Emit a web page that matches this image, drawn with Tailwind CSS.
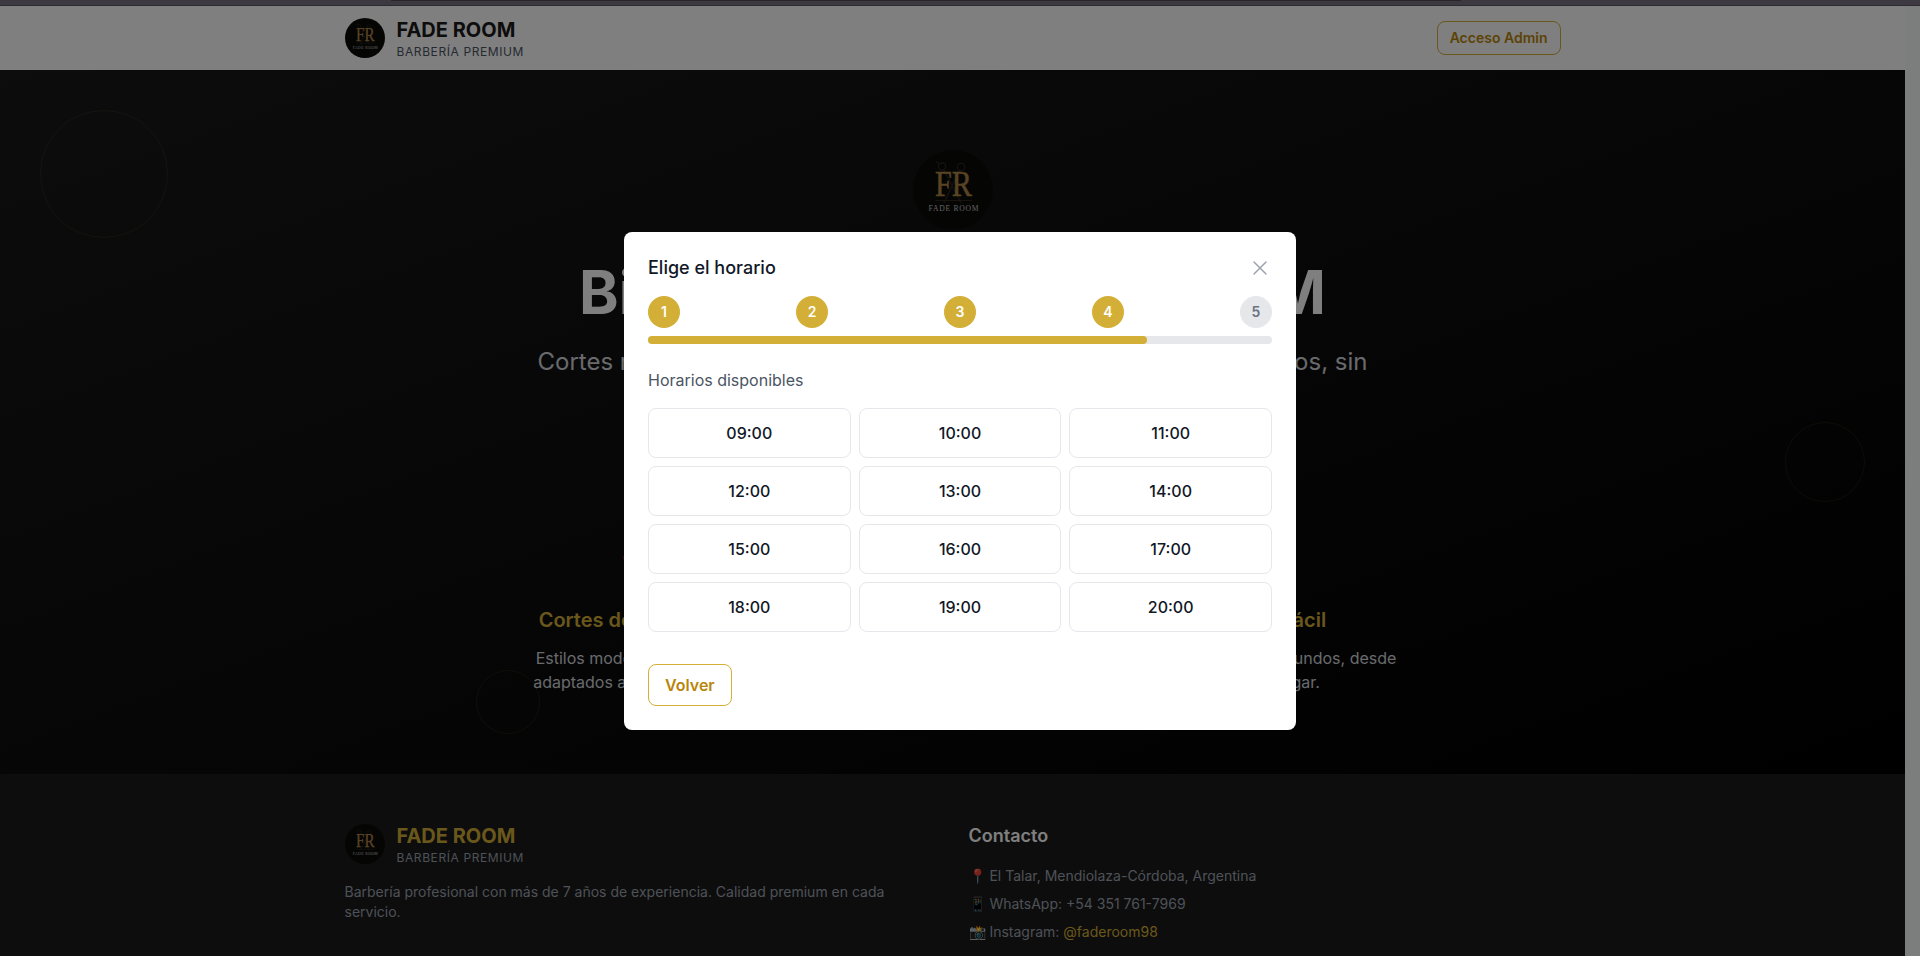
<!DOCTYPE html>
<html lang="es">
<head>
<meta charset="utf-8">
<title>Fade Room</title>
<script src="https://cdn.jsdelivr.net/npm/@tailwindcss/browser@4"></script>
</head>
<body class="h-[956px] w-[1920px] overflow-hidden bg-black font-['Inter',sans-serif] antialiased">
<svg class="hidden">
  <symbol id="logo" viewBox="0 0 80 80">
    <circle cx="40" cy="40" r="40" fill="#0b0b08"/>
    <g fill="none" stroke="#2b2823" stroke-width="1.2">
      <circle cx="29" cy="16.500" r="3.600"/><circle cx="48" cy="17" r="3.800"/>
      <path d="M31 20L48 53M46 21L31 53M26 13l-3-1"/>
    </g>
    <path d="M22.500 50.500H59" stroke="#3a3020" stroke-width=".8"/>
    <text x="22" y="46" textLength="37" lengthAdjust="spacingAndGlyphs" font-family="Liberation Serif, serif" font-size="36" fill="#b08848" stroke="#b08848" stroke-width=".5">FR</text>
    <text x="15.500" y="61" textLength="50" lengthAdjust="spacing" font-family="Liberation Serif, serif" font-size="7.600" fill="#c4c4c4">FADE ROOM</text>
  </symbol>
</svg>
<div class="relative flex h-[956px] flex-col overflow-hidden">
  <div class="h-1.5 shrink-0 border-b border-[#2d2b31] bg-[#3c3a40]"><div class="ml-[391px] h-px w-[1070px] rounded-full bg-[#28262b]"></div></div>
  <div class="relative flex min-h-0 flex-1">
    <div class="w-[1905px] shrink-0 overflow-hidden">
      <header class="h-16 bg-white">
        <div class="mx-auto flex h-16 max-w-7xl items-center justify-between px-8">
          <div class="flex items-center gap-3">
            <svg class="size-10"><use href="#logo"/></svg>
            <div>
              <div class="text-xl font-bold text-[#1a1a1a]">FADE ROOM</div>
              <div class="text-xs tracking-wider text-[#4b5563]">BARBERÍA PREMIUM</div>
            </div>
          </div>
          <button class="rounded-lg border border-[#d4af37] px-3 py-1.5 text-sm font-semibold text-[#b8860b]">Acceso Admin</button>
        </div>
      </header>
      <section class="relative h-[704px] bg-linear-to-br/srgb from-[#1a1a1a] to-black py-20 text-center text-white">
        <div class="absolute top-10 left-10 size-32 rounded-full border border-[#d4af37]/10"></div>
        <div class="absolute top-1/2 right-10 size-20 rounded-full border border-[#d4af37]/10"></div>
        <div class="absolute bottom-10 left-1/4 size-16 rounded-full border border-[#d4af37]/10"></div>
        <div class="mx-auto flex h-full w-4xl flex-col items-center">
          <svg class="mb-8 size-20"><use href="#logo"/></svg>
          <h1 class="mb-6 flex w-[747px] justify-between text-6xl leading-none font-bold whitespace-nowrap"><span>Bienvenido a</span><span>FADE ROOM</span></h1>
          <p class="flex w-[830px] justify-between text-2xl whitespace-nowrap text-[#d1d5db]"><span>Cortes modernos y clásicos.</span><span>Reserva en segundos, sin</span></p>
          <p class="text-2xl text-[#d1d5db]">complicaciones.</p>
          <div class="mt-auto grid w-full grid-cols-3 gap-8">
            <div>
              <div class="mb-4 text-4xl">✂️</div>
              <h3 class="mb-3 text-xl font-semibold whitespace-nowrap text-[#d4af37]"><span class="inline-block w-[209px] text-left">Cortes de Precisión</span></h3>
              <p class="mx-auto w-[215px] text-left whitespace-nowrap text-[#d1d5db]">Estilos modernos y clásicos</p>
              <p class="mx-auto w-[220px] text-left whitespace-nowrap text-[#d1d5db]">adaptados a tu personalidad.</p>
            </div>
            <div>
              <div class="mb-4 text-4xl">⭐</div>
              <h3 class="mb-3 text-xl font-semibold text-[#d4af37]">Experiencia</h3>
              <p class="text-[#d1d5db]">Más de 7 años de experiencia en barbería profesional.</p>
            </div>
            <div>
              <div class="mb-4 text-4xl">📱</div>
              <h3 class="mb-3 text-xl font-semibold text-[#d4af37]">Reserva Fácil</h3>
              <p class="mx-auto flex w-[269px] justify-between whitespace-nowrap text-[#d1d5db]"><span>Reserva</span><span>en segundos, desde</span></p>
              <p class="text-[#d1d5db]">cualquier lugar.</p>
            </div>
          </div>
        </div>
      </section>
      <footer class="h-60 bg-[#1a1a1a] py-12">
        <div class="mx-auto grid max-w-7xl grid-cols-2 gap-8 px-8">
          <div>
            <div class="mb-4 flex items-center gap-3">
              <svg class="size-10"><use href="#logo"/></svg>
              <div>
                <div class="text-xl font-bold text-[#d4af37]">FADE ROOM</div>
                <div class="text-xs tracking-wider text-[#9ca3af]">BARBERÍA PREMIUM</div>
              </div>
            </div>
            <p class="text-sm text-[#9ca3af]">Barbería profesional con más de 7 años de experiencia. Calidad premium en cada servicio.</p>
          </div>
          <div>
            <h3 class="mb-4 text-lg font-semibold text-white">Contacto</h3>
            <div class="space-y-2 text-sm text-[#9ca3af]">
              <p>📍 El Talar, Mendiolaza-Córdoba, Argentina</p>
              <p>📱 WhatsApp: +54 351 761-7969</p>
              <p>📸 Instagram: <a class="text-[#d4af37]">@faderoom98</a></p>
            </div>
          </div>
        </div>
      </footer>
    </div>
    <div class="w-[15px] bg-[#f8fbfa]"></div>
    <div class="absolute inset-0 flex items-center justify-center bg-black/50">
      <div class="w-2xl rounded-lg bg-white p-6">
        <div class="mb-4 flex h-6 items-center justify-between">
          <h2 class="text-lg leading-6 font-medium text-[#111827]">Elige el horario</h2>
          <svg class="size-6 text-[#9ca3af]" fill="none" viewBox="0 0 24 24" stroke="currentColor" stroke-width="1.5"><path stroke-linecap="round" stroke-linejoin="round" d="M6 18L18 6M6 6l12 12"/></svg>
        </div>
        <div class="mb-2 flex justify-between text-sm font-semibold text-white">
          <div class="flex size-8 items-center justify-center rounded-full bg-[#d4af37]">1</div>
          <div class="flex size-8 items-center justify-center rounded-full bg-[#d4af37]">2</div>
          <div class="flex size-8 items-center justify-center rounded-full bg-[#d4af37]">3</div>
          <div class="flex size-8 items-center justify-center rounded-full bg-[#d4af37]">4</div>
          <div class="flex size-8 items-center justify-center rounded-full bg-gray-200 text-[#6b7280]">5</div>
        </div>
        <div class="mb-6 h-2 rounded-full bg-gray-200"><div class="h-2 w-4/5 rounded-full bg-[#d4af37]"></div></div>
        <p class="mb-4 text-[#4b5563]">Horarios disponibles</p>
        <div class="mb-8 grid grid-cols-3 gap-2 font-medium text-[#111827]">
          <button class="rounded-lg border border-gray-200 p-3">09:00</button>
          <button class="rounded-lg border border-gray-200 p-3">10:00</button>
          <button class="rounded-lg border border-gray-200 p-3">11:00</button>
          <button class="rounded-lg border border-gray-200 p-3">12:00</button>
          <button class="rounded-lg border border-gray-200 p-3">13:00</button>
          <button class="rounded-lg border border-gray-200 p-3">14:00</button>
          <button class="rounded-lg border border-gray-200 p-3">15:00</button>
          <button class="rounded-lg border border-gray-200 p-3">16:00</button>
          <button class="rounded-lg border border-gray-200 p-3">17:00</button>
          <button class="rounded-lg border border-gray-200 p-3">18:00</button>
          <button class="rounded-lg border border-gray-200 p-3">19:00</button>
          <button class="rounded-lg border border-gray-200 p-3">20:00</button>
        </div>
        <button class="block rounded-lg border border-[#d4af37] px-4 py-2 font-semibold text-[#b8860b]">Volver</button>
      </div>
    </div>
  </div>
</div>
</body>
</html>
